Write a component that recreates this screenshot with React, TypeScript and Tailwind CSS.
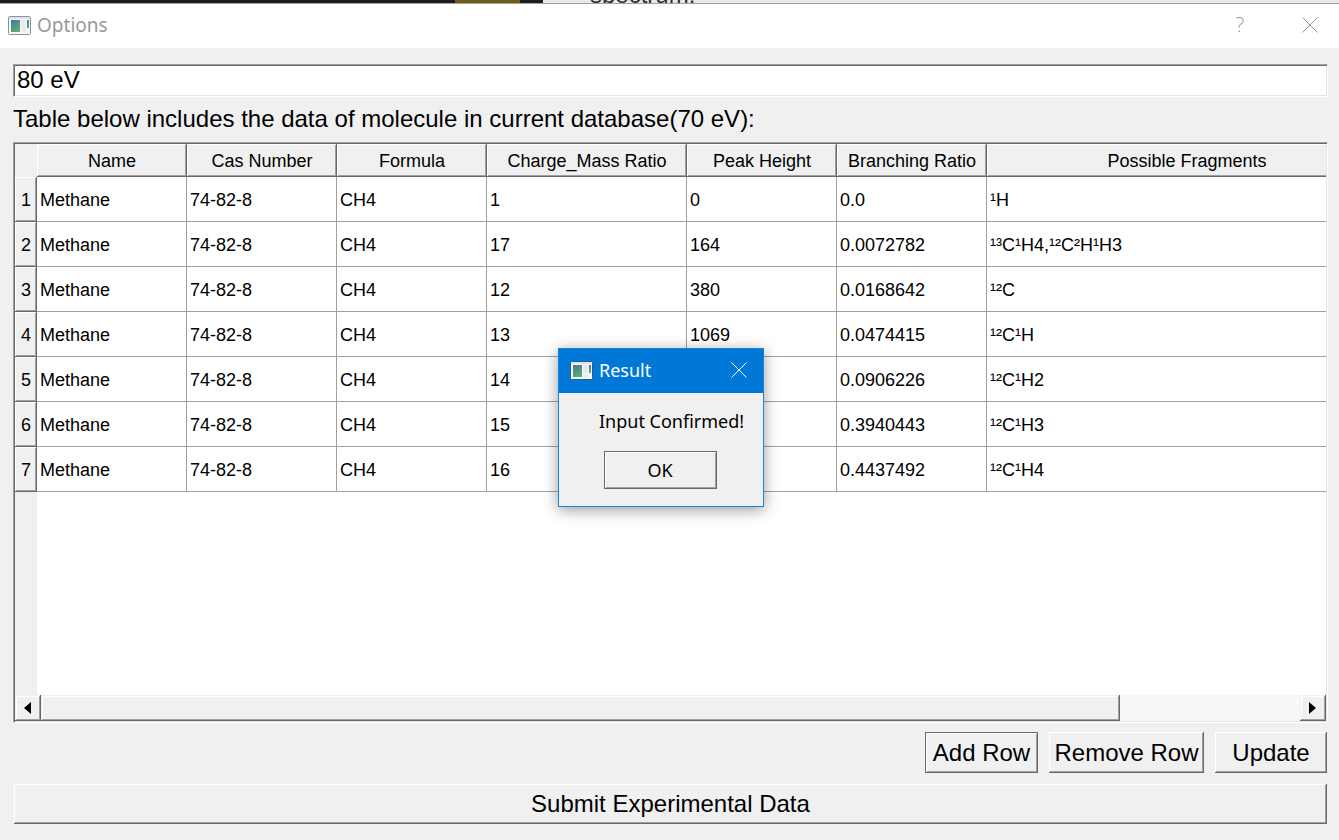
import React from "react";

const RAISED =
  "shadow-[inset_-1px_-1px_#696969,inset_1px_1px_#ffffff,inset_-2px_-2px_#a0a0a0] bg-[#f0f0f0]";
const SCROLL_RAISED =
  "shadow-[inset_-1px_-1px_#696969,inset_1px_1px_#f0f0f0,inset_-2px_-2px_#a0a0a0,inset_2px_2px_#ffffff] bg-[#f0f0f0]";
const DEFAULT_RAISED =
  "border border-[#696969] shadow-[inset_1px_1px_#ffffff,inset_-1px_-1px_#a0a0a0] bg-[#f0f0f0]";
const SUNKEN =
  "border border-t-[#a0a0a0] border-l-[#a0a0a0] border-r-white border-b-white shadow-[inset_1px_1px_#696969,inset_-1px_-1px_#e3e3e3] bg-white";

const columns = [
  { title: "Name", width: "w-[150px]" },
  { title: "Cas Number", width: "w-[150px]" },
  { title: "Formula", width: "w-[150px]" },
  { title: "Charge_Mass Ratio", width: "w-[200px]" },
  { title: "Peak Height", width: "w-[150px]" },
  { title: "Branching Ratio", width: "w-[150px]" },
  { title: "Possible Fragments", width: "w-[400px]" },
];

const rows = [
  ["1", "0", "0.0", "¹H"],
  ["17", "164", "0.0072782", "¹³C¹H4,¹²C²H¹H3"],
  ["12", "380", "0.0168642", "¹²C"],
  ["13", "1069", "0.0474415", "¹²C¹H"],
  ["14", "", "0.0906226", "¹²C¹H2"],
  ["15", "", "0.3940443", "¹²C¹H3"],
  ["16", "", "0.4437492", "¹²C¹H4"],
];

function AppIcon({ edge }: { edge: string }) {
  return (
    <svg width="23" height="19" viewBox="0 0 23 19" aria-hidden="true" className="shrink-0">
      <defs>
        <linearGradient id="pane" x1="0" y1="0" x2="0.6" y2="1">
          <stop offset="0" stopColor="#4a6fa5" />
          <stop offset="0.5" stopColor="#4f918d" />
          <stop offset="1" stopColor="#5fae72" />
        </linearGradient>
      </defs>
      <rect x="0.5" y="0.5" width="22" height="18" rx="1" fill="#f4f5f6" stroke={edge} />
      <rect x="1" y="1" width="21" height="2" fill="#dfe3e8" />
      <rect x="3" y="4" width="9" height="12" fill="url(#pane)" />
      <rect x="13.5" y="4" width="4" height="8" fill="#e6e8ea" />
      <rect x="14" y="13" width="4" height="3" fill="#e9ebec" />
      <rect x="19" y="4" width="2" height="8" fill="url(#pane)" />
    </svg>
  );
}

function Cross() {
  return (
    <svg width="16" height="16" viewBox="0 0 16 16" fill="none" stroke="currentColor" aria-hidden="true">
      <path d="M0.5 0.5 15.5 15.5M15.5 0.5 0.5 15.5" />
    </svg>
  );
}

function BackgroundStrip() {
  return (
    <div className="flex h-[3px] overflow-hidden bg-[#e9e9e9]">
      <div className="w-[455px] bg-[#1c1c1c]" />
      <div className="w-[65px] bg-[#6d5c14]" />
      <div className="w-[23px] bg-[#1f1f20]" />
      <div className="flex flex-1 items-end pl-[47px] text-[24px] leading-4 text-[#303030]">
        spectrum:
      </div>
    </div>
  );
}

function TitleBar() {
  return (
    <header className="flex h-[45px] items-center border-t border-[#a3a3a3] bg-white pr-[21px] pb-0.5 pl-2 text-[#999999]">
      <AppIcon edge="#8b9299" />
      <h1 className="ml-1.5 flex-1 font-['Noto_Sans',sans-serif] text-[19px]">Options</h1>
      <button className="w-9 font-['Open_Sans',sans-serif] text-[20px] font-light" aria-label="Help">
        ?
      </button>
      <button className="ml-11" aria-label="Close">
        <Cross />
      </button>
    </header>
  );
}

function MoleculeTable() {
  return (
    <table className="w-[1372px] table-fixed border-separate border-spacing-0 text-[18px] leading-6">
      <thead>
        <tr className="h-[33px]">
          <td className="w-[22px] bg-[#f0f0f0] p-0" />
          {columns.map((c) => (
            <th key={c.title} scope="col" className={`${c.width} ${RAISED} p-0 font-normal`}>
              {c.title}
            </th>
          ))}
        </tr>
      </thead>
      <tbody>
        {rows.map((r, i) => (
          <tr key={i} className="h-[45px]">
            <th scope="row" className={`${RAISED} p-0 font-normal`}>
              {i + 1}
            </th>
            {["Methane", "74-82-8", "CH4", ...r].map((value, j) => (
              <td key={j} className="border-r border-b border-[#a0a0a0] bg-white pt-0.5 pr-0 pb-0 pl-[3px]">
                {value}
              </td>
            ))}
          </tr>
        ))}
      </tbody>
    </table>
  );
}

function ScrollBar() {
  return (
    <div className="flex h-[26px] shrink-0 bg-[repeating-conic-gradient(#ffffff_0_25%,#f0f0f0_0_50%)] bg-[length:2px_2px]">
      <button aria-label="Scroll left" className={`flex w-[26px] items-center justify-center pr-0.5 ${SCROLL_RAISED}`}>
        <svg width="7" height="12" viewBox="0 0 7 12" aria-hidden="true">
          <path d="M7 0V12L0 6Z" />
        </svg>
      </button>
      <div className="flex flex-1">
        <div className={`w-[1079px] ${SCROLL_RAISED}`} />
      </div>
      <button aria-label="Scroll right" className={`flex w-[26px] items-center justify-center pr-0.5 ${SCROLL_RAISED}`}>
        <svg width="7" height="12" viewBox="0 0 7 12" aria-hidden="true">
          <path d="M0 0V12L7 6Z" />
        </svg>
      </button>
    </div>
  );
}

function ResultDialog() {
  return (
    <div
      role="dialog"
      aria-labelledby="result-title"
      className="absolute top-[348px] left-[558px] w-[206px] border border-[#1883d7] bg-[#f0f0f0] font-['Noto_Sans',sans-serif] text-[18px] leading-6 shadow-[0_3px_14px_rgba(0,0,0,0.4)]"
    >
      <div className="flex h-11 items-center bg-[#0078d7] pr-4 pb-0.5 pl-[11px] text-white">
        <AppIcon edge="#1f5f96" />
        <h2 id="result-title" className="ml-1.5 flex-1">
          Result
        </h2>
        <button aria-label="Close result">
          <Cross />
        </button>
      </div>
      <p className="pt-4 pl-10 whitespace-nowrap">Input Confirmed!</p>
      <div className="flex justify-center pt-[18px] pr-0.5 pb-[17px]">
        <button className={`h-[38px] w-[113px] ${DEFAULT_RAISED}`}>OK</button>
      </div>
    </div>
  );
}

export default function App() {
  return (
    <div className="relative flex min-h-screen flex-col bg-[#f0f0f0] font-['Liberation_Sans',Arial,sans-serif] text-black">
      <BackgroundStrip />
      <TitleBar />
      <main className="flex flex-1 flex-col pt-4 pr-[11px] pb-4 pl-[13px] text-[24px] leading-7">
        <input
          aria-label="Electron energy"
          defaultValue="80 eV"
          className={`h-[33px] w-full pb-0.5 pl-[3px] outline-none ${SUNKEN}`}
        />
        <p className="pt-2 pb-[9px]">Table below includes the data of molecule in current database(70 eV):</p>
        <section className={`flex flex-1 flex-col overflow-hidden p-px ${SUNKEN}`}>
          <div className="flex-1 overflow-hidden bg-[linear-gradient(to_right,#f0f0f0_22px,#ffffff_22px)]">
            <MoleculeTable />
          </div>
          <ScrollBar />
        </section>
        <div className="flex justify-end gap-[11px] pt-[9px] pr-px">
          <button className={`h-[41px] w-[113px] ${DEFAULT_RAISED}`}>Add Row</button>
          <button className={`h-[41px] w-[155px] ${RAISED}`}>Remove Row</button>
          <button className={`h-[41px] w-[112px] ${RAISED}`}>Update</button>
        </div>
        <button className={`mt-[11px] mr-px ml-px h-10 ${RAISED}`}>Submit Experimental Data</button>
      </main>
      <ResultDialog />
    </div>
  );
}
